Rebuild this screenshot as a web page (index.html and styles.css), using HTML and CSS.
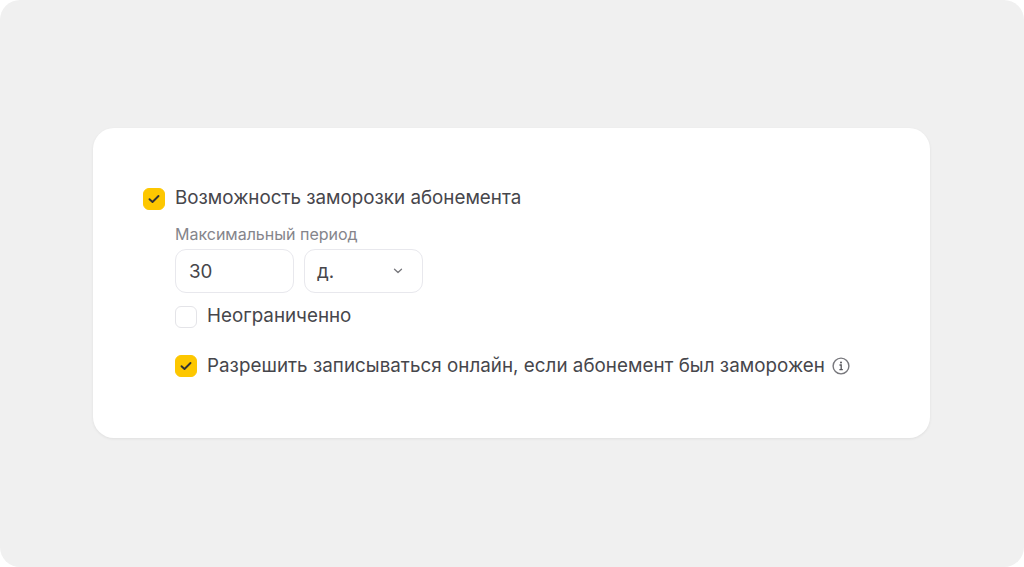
FILE: index.html
```
<!DOCTYPE html>
<html lang="ru">
<head>
<meta charset="utf-8">
<title>Заморозка</title>
<link rel="stylesheet" href="styles.css">
</head>
<body>
<main class="stage">
  <section class="card">
    <label class="row row-low">
      <span class="box on"><svg width="12" height="10" viewBox="0 0 12 10"><path d="M1.5 5.2 4.5 8 10.5 2" fill="none" stroke="#333" stroke-width="1.9" stroke-linecap="round" stroke-linejoin="round"/></svg></span>
      <span>Возможность заморозки абонемента</span>
    </label>
    <div class="nested">
      <div class="caption">Максимальный период</div>
      <div class="fields">
        <div class="field num">30</div>
        <div class="field unit"><span>д.</span><svg width="10" height="6" viewBox="0 0 10 6"><path d="M1.5 1.2 5 4.5 8.5 1.2" fill="none" stroke="#77777c" stroke-width="1.3" stroke-linecap="round" stroke-linejoin="round"/></svg></div>
      </div>
      <label class="row row-low row-unlimited">
        <span class="box"></span>
        <span>Неограниченно</span>
      </label>
      <label class="row row-online">
        <span class="box on"><svg width="12" height="10" viewBox="0 0 12 10"><path d="M1.5 5.2 4.5 8 10.5 2" fill="none" stroke="#333" stroke-width="1.9" stroke-linecap="round" stroke-linejoin="round"/></svg></span>
        <span class="online-text">Разрешить записываться онлайн, если абонемент был заморожен</span>
        <svg class="info" width="18" height="18" viewBox="0 0 18 18"><circle cx="9" cy="9" r="7.9" fill="none" stroke="#77777c" stroke-width="1.4"/><circle cx="9" cy="5.4" r="1" fill="#55555a"/><path d="M7.5 8H9.2V12.4M7.4 12.6H10.8" fill="none" stroke="#55555a" stroke-width="1.3"/></svg>
      </label>
    </div>
  </section>
</main>
</body>
</html>
```
FILE: styles.css
```
* { box-sizing: border-box; }
html, body { margin: 0; height: 100%; background: #fff; }
.stage {
  width: 1024px;
  height: 567px;
  background: #f0f0f0;
  border-radius: 20px;
  padding: 128px 93px 0;
  font-family: Inter, "Noto Sans", sans-serif;
  color: #46464b;
  overflow: hidden;
}
.card {
  width: 837px;
  height: 310px;
  background: #fff;
  border-radius: 21px;
  box-shadow: 0 1px 3px rgba(0, 0, 0, 0.07);
  padding: 59px 50px 0;
}
.row {
  display: flex;
  align-items: center;
  gap: 10px;
  font-size: 18.8px;
  line-height: 22px;
}
.row-low { align-items: flex-start; }
.row-low .box { margin-top: 1px; }
.box {
  width: 22px;
  height: 22px;
  flex: none;
  border-radius: 6px;
  border: 1.5px solid #e4e4e8;
  background: #fff;
  display: flex;
  align-items: center;
  justify-content: center;
}
.box.on { background: #fdc700; border-color: #fdc700; }
.nested { margin-left: 32px; }
.caption {
  margin-top: 14px;
  font-size: 16px;
  line-height: 20px;
  color: #85858b;
}
.fields { display: flex; gap: 10px; margin-top: 5px; }
.field {
  height: 44px;
  border: 1.5px solid #e8e8ed;
  border-radius: 11px;
  display: flex;
  align-items: center;
  font-size: 18.8px;
  padding: 0 12px;
}
.num { width: 119px; padding-left: 13px; }
.unit { width: 119px; justify-content: space-between; padding-right: 19px; }
.row-unlimited { margin-top: 12px; }
.row-online { margin-top: 27px; }
.online-text { letter-spacing: 0.03px; }
.info { margin-left: -3px; }
```
